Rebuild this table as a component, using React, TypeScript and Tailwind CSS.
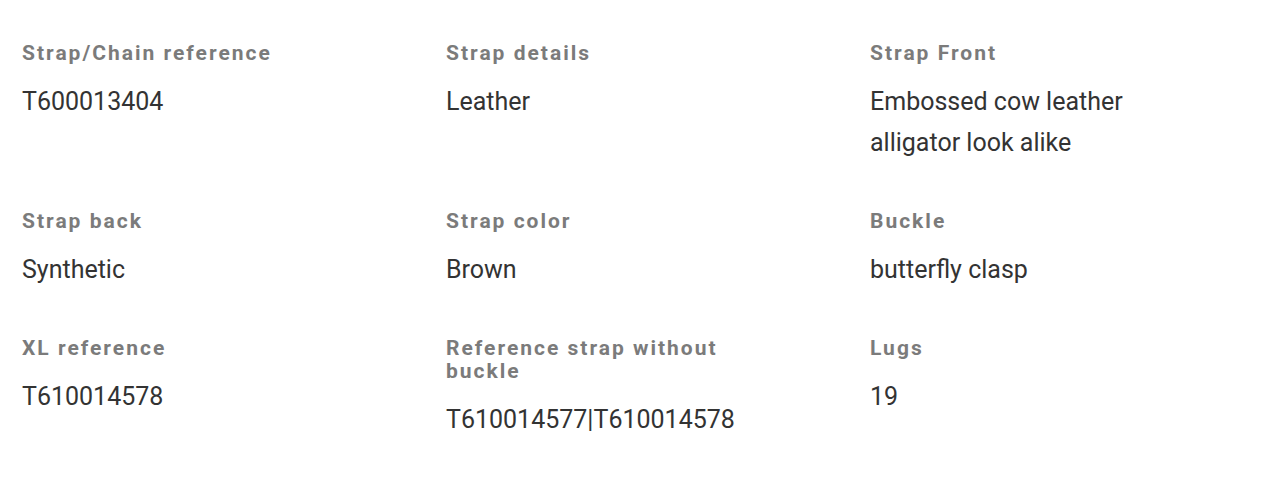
const items = [
  { label: "Strap/Chain reference", value: "T600013404" },
  { label: "Strap details", value: "Leather" },
  { label: "Strap Front", value: "Embossed cow leather alligator look alike" },
  { label: "Strap back", value: "Synthetic" },
  { label: "Strap color", value: "Brown" },
  { label: "Buckle", value: "butterfly clasp" },
  { label: "XL reference", value: "T610014578" },
  { label: "Reference strap without buckle", value: "T610014577|T610014578" },
  { label: "Lugs", value: "19" },
];

const Spec = ({ label, value }: { label: string; value: string }) => {
  return (
    <div className="flex flex-col">
      <div className="text-[21px] leading-[23px] font-bold tracking-[2px] text-[#7b7b7b] mb-4">
        {label}
      </div>
      <div className="text-[25px] leading-[41px] text-[#333333]">{value}</div>
    </div>
  );
};

export default function App() {
  return (
    <div
      className="min-h-screen bg-white pl-[22px] pt-[42px]"
      style={{ fontFamily: "Roboto, 'Liberation Sans', sans-serif" }}
    >
      <div className="grid grid-cols-[320px_320px_320px] gap-x-[104px] gap-y-[47px]">
        {items.map((it) => (
          <Spec key={it.label} label={it.label} value={it.value} />
        ))}
      </div>
    </div>
  );
}
